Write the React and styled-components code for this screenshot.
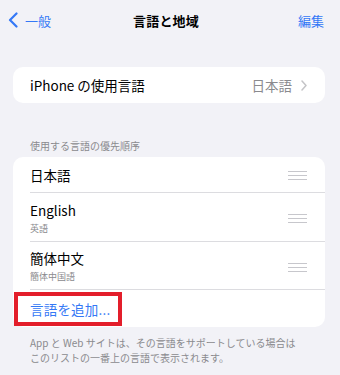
import React from "react";
import styled, { createGlobalStyle } from "styled-components";

const Global = createGlobalStyle`
  html, body { margin: 0; padding: 0; background: #f2f2f7; }
  body { font-family: "Noto Sans CJK JP", "Noto Sans", sans-serif; -webkit-font-smoothing: antialiased; }
`;

const Page = styled.div`
  width: 340px;
  height: 375px;
  background: #f2f2f7;
  overflow: hidden;
  color: #000;
`;

const NavBar = styled.div`
  height: 40px;
  display: grid;
  grid-template-columns: 1fr auto 1fr;
  align-items: center;
  padding: 0 16px 0 8px;
`;

const BackButton = styled.div`
  display: flex;
  align-items: center;
  gap: 7px;
  color: #3478f6;
  font-size: 13px;
`;

const NavTitle = styled.div`
  font-size: 13px;
  font-weight: 700;
  letter-spacing: 0.2px;
`;

const NavAction = styled.div`
  justify-self: end;
  color: #3478f6;
  font-size: 13px;
`;

const Card = styled.div`
  margin: ${(p) => p.$mt || 0}px 15px 0 13px;
  background: #fff;
  border-radius: 10px;
`;

const Row = styled.div`
  position: relative;
  display: flex;
  align-items: center;
  justify-content: space-between;
  height: ${(p) => p.$h}px;
  padding: 0 18px 0 17px;
  box-sizing: border-box;
  &::after {
    content: "";
    display: ${(p) => (p.$sep ? "block" : "none")};
    position: absolute;
    left: 17px;
    right: 0;
    bottom: 0;
    height: 1px;
    background: #dcdce0;
  }
`;

const Label = styled.div`
  font-size: 13.5px;
  line-height: 17px;
`;

const Sub = styled.div`
  font-size: 9px;
  line-height: 11px;
  color: #8a8a8e;
  margin-top: 4px;
`;

const Value = styled.div`
  display: flex;
  align-items: center;
  gap: 9px;
  color: #8a8a8e;
  font-size: 13.5px;
`;

const SectionHeader = styled.div`
  margin: 36px 0 0 30px;
  font-size: 10px;
  line-height: 14px;
  color: #8a8a8e;
  height: 18px;
`;

const Grip = styled.div`
  display: flex;
  flex-direction: column;
  gap: 3px;
  width: 19px;
  margin-top: ${(p) => p.$mt || 0}px;
  span {
    display: block;
    height: 1px;
    background: #c7c7cc;
  }
`;

const AddLink = styled.div`
  color: #3478f6;
  font-size: 13.5px;
  letter-spacing: 0.2px;
`;

const Highlight = styled.div`
  position: absolute;
  left: 1px;
  top: 2px;
  width: 108px;
  height: 34px;
  border: 4px solid #e31e2b;
  box-sizing: border-box;
  pointer-events: none;
`;

const Footer = styled.div`
  margin: 8px 16px 0 30px;
  font-size: 10px;
  line-height: 15px;
  color: #8a8a8e;
`;

const GripIcon = ({ mt }) => (
  <Grip $mt={mt}>
    <span />
    <span />
    <span />
  </Grip>
);

export default function App() {
  return (
    <Page>
      <Global />
      <NavBar>
        <BackButton>
          <svg width="10" height="16" viewBox="0 0 10 16">
            <path d="M8.5 1.5 L2 8 L8.5 14.5" fill="none" stroke="#3478f6" strokeWidth="2.2" strokeLinecap="round" strokeLinejoin="round" />
          </svg>
          一般
        </BackButton>
        <NavTitle>言語と地域</NavTitle>
        <NavAction>編集</NavAction>
      </NavBar>

      <Card $mt={27}>
        <Row $h={36}>
          <Label>iPhone の使用言語</Label>
          <Value>
            日本語
            <svg width="6" height="11" viewBox="0 0 6 11">
              <path d="M1 1 L5 5.5 L1 10" fill="none" stroke="#c4c4c7" strokeWidth="1.5" strokeLinecap="round" strokeLinejoin="round" />
            </svg>
          </Value>
        </Row>
      </Card>

      <SectionHeader>使用する言語の優先順序</SectionHeader>

      <Card>
        <Row $h={36} $sep>
          <Label>日本語</Label>
          <GripIcon />
        </Row>
        <Row $h={49} $sep>
          <div>
            <Label>English</Label>
            <Sub>英語</Sub>
          </div>
          <GripIcon mt={2} />
        </Row>
        <Row $h={48} $sep>
          <div>
            <Label>簡体中文</Label>
            <Sub>簡体中国語</Sub>
          </div>
          <GripIcon mt={2} />
        </Row>
        <Row $h={37}>
          <AddLink>言語を追加...</AddLink>
          <Highlight />
        </Row>
      </Card>

      <Footer>
        App と Web サイトは、その言語をサポートしている場合は
        <br />
        このリストの一番上の言語で表示されます。
      </Footer>
    </Page>
  );
}
